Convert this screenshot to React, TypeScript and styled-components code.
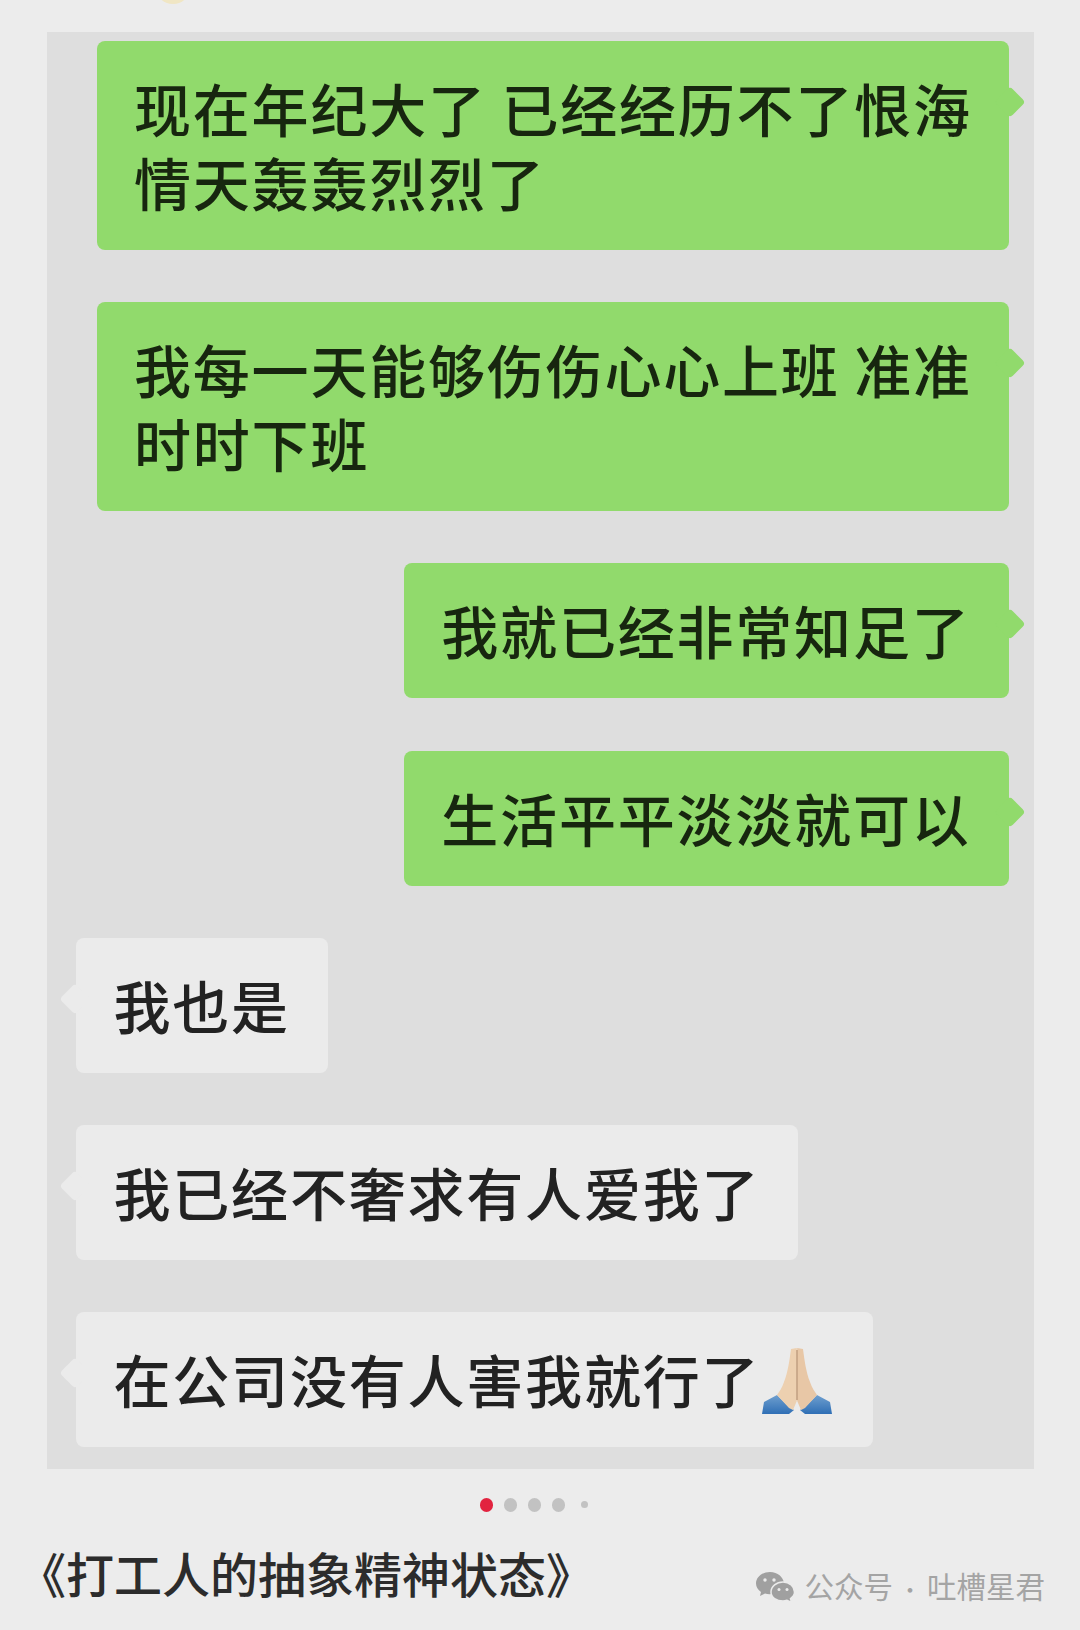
import React from 'react';
import styled, { createGlobalStyle } from 'styled-components';

const GlobalStyle = createGlobalStyle`
  html, body {
    margin: 0;
    padding: 0;
    background: #ececec;
  }
  body {
    font-family: "Noto Sans CJK SC", "Liberation Sans", sans-serif;
  }
`;

const Page = styled.div`
  position: relative;
  width: 1080px;
  height: 1630px;
  overflow: hidden;
  padding-top: 32px;
  box-sizing: border-box;
  background: #ececec;
`;

const TopEmojiEdge = styled.div`
  position: absolute;
  left: 155px;
  top: -32px;
  width: 36px;
  height: 36px;
  border-radius: 50%;
  background: #f0e6c4;
`;

const ChatPanel = styled.div`
  margin: 0 46.5px;
  height: 1437px;
  box-sizing: border-box;
  padding: 9px 25px 0 29.5px;
  background: #dedede;
  display: flex;
  flex-direction: column;
  gap: 52.2px;
`;

const Bubble = styled.div<{ $mine?: boolean; $wide?: boolean }>`
  position: relative;
  box-sizing: border-box;
  align-self: ${(p) => (p.$mine ? 'flex-end' : 'flex-start')};
  width: ${(p) => (p.$wide ? '912px' : 'auto')};
  padding: 29px ${(p) => (p.$wide ? '20px' : '38px')} 32px 37.5px;
  border-radius: 8px;
  font-size: 57px;
  line-height: 74px;
  letter-spacing: 1.8px;
  font-weight: 500;
  color: ${(p) => (p.$mine ? '#17260f' : '#222222')};
  background: ${(p) => (p.$mine ? '#91da6c' : '#ebebeb')};

  &::after {
    content: '';
    position: absolute;
    top: 50px;
    ${(p) => (p.$mine ? 'right: -12px;' : 'left: -12px;')}
    width: 22px;
    height: 22px;
    border-radius: 4px;
    background: inherit;
    transform: rotate(45deg);
  }
`;

const PrayEmoji = styled.svg`
  display: inline-block;
  width: 70px;
  height: 70px;
  margin: -10px 3px -10px 2px;
  vertical-align: -3px;
`;

const Dots = styled.div`
  display: flex;
  justify-content: flex-start;
  align-items: center;
  gap: 10.5px;
  margin: 29px 0 0 479.5px;
`;

const Dot = styled.span<{ $active?: boolean; $small?: boolean }>`
  width: ${(p) => (p.$small ? '7px' : '13.5px')};
  height: ${(p) => (p.$small ? '7px' : '13.5px')};
  margin-left: ${(p) => (p.$small ? '5px' : '0')};
  border-radius: 50%;
  background: ${(p) => (p.$active ? '#e2233f' : '#c2c2c2')};
`;

const Footer = styled.div`
  display: flex;
  align-items: flex-start;
  justify-content: space-between;
  margin-top: 30px;
  padding: 0 35px 0 18px;
`;

const Title = styled.div`
  font-size: 48px;
  line-height: 60px;
  font-weight: 500;
  color: #2c2c2c;
`;

const Watermark = styled.div`
  display: flex;
  align-items: center;
  gap: 9px;
  margin-top: 23.5px;
  font-size: 29.5px;
  line-height: 40px;
  color: #a4a4a4;
`;

const Separator = styled.span`
  display: inline-block;
  width: 34px;
  font-size: 22px;
  text-align: center;
`;

function PrayIcon() {
  return (
    <PrayEmoji viewBox="0 0 70 70">
      <defs>
        <linearGradient id="sleeve" x1="0" y1="0" x2="0" y2="1">
          <stop offset="0" stopColor="#6f9fcf" />
          <stop offset="1" stopColor="#2f6fb5" />
        </linearGradient>
      </defs>
      <path d="M0 68 L2 56 L15 49 L27 61 L32 64 L27 68Z" fill="url(#sleeve)" />
      <path d="M70 68 L68 56 L55 49 L43 61 L38 64 L43 68Z" fill="url(#sleeve)" />
      <path d="M34.8 2 L29 3 C27.5 14 26 26 22 36 C20 42 17 46 15 49 L27 62 L31 64 L34.8 55Z" fill="#edd0b0" />
      <path d="M35.2 2 L41 3 C42.5 14 44 26 48 36 C50 42 53 46 55 49 L43 62 L39 64 L35.2 55Z" fill="#e8c7a6" />
      <path d="M35 4 V54" stroke="#b8906f" strokeWidth="1.2" fill="none" />
    </PrayEmoji>
  );
}

function WechatIcon() {
  return (
    <svg width="40" height="32" viewBox="0 0 40 32">
      <path d="M15 1 C7 1 1 6.2 1 12.5 C1 16 3 19 6 21 L5 25 L10 22.5 C11.5 23 13 23.2 14.5 23.2 C20 23.2 29 18 29 12 C28 6 23 1 15 1Z" fill="#a0a0a0" />
      <path d="M28 11 C21.5 11 16 15.5 16 21 C16 26.5 21.5 30 28 30 C29.5 30 30.5 29.8 32 29.3 L36.5 31.5 L35.5 27.5 C38 25.8 39.5 23.5 39.5 21 C39.5 15.5 34.5 11 28 11Z" fill="#a0a0a0" stroke="#ececec" strokeWidth="1.5" />
      <circle cx="10" cy="9" r="1.7" fill="#ececec" />
      <circle cx="19" cy="9" r="1.7" fill="#ececec" />
      <circle cx="24" cy="18.5" r="1.5" fill="#ececec" />
      <circle cx="32" cy="18.5" r="1.5" fill="#ececec" />
    </svg>
  );
}

export default function App() {
  return (
    <>
      <GlobalStyle />
      <Page>
        <TopEmojiEdge />
        <ChatPanel>
          <Bubble $mine $wide>现在年纪大了 已经经历不了恨海情天轰轰烈烈了</Bubble>
          <Bubble $mine $wide>我每一天能够伤伤心心上班 准准时时下班</Bubble>
          <Bubble $mine>我就已经非常知足了</Bubble>
          <Bubble $mine>生活平平淡淡就可以</Bubble>
          <Bubble>我也是</Bubble>
          <Bubble>我已经不奢求有人爱我了</Bubble>
          <Bubble>在公司没有人害我就行了<PrayIcon /></Bubble>
        </ChatPanel>
        <Dots>
          <Dot $active />
          <Dot />
          <Dot />
          <Dot />
          <Dot $small />
        </Dots>
        <Footer>
          <Title>《打工人的抽象精神状态》</Title>
          <Watermark>
            <WechatIcon />
            <span>公众号<Separator>·</Separator>吐槽星君</span>
          </Watermark>
        </Footer>
      </Page>
    </>
  );
}
